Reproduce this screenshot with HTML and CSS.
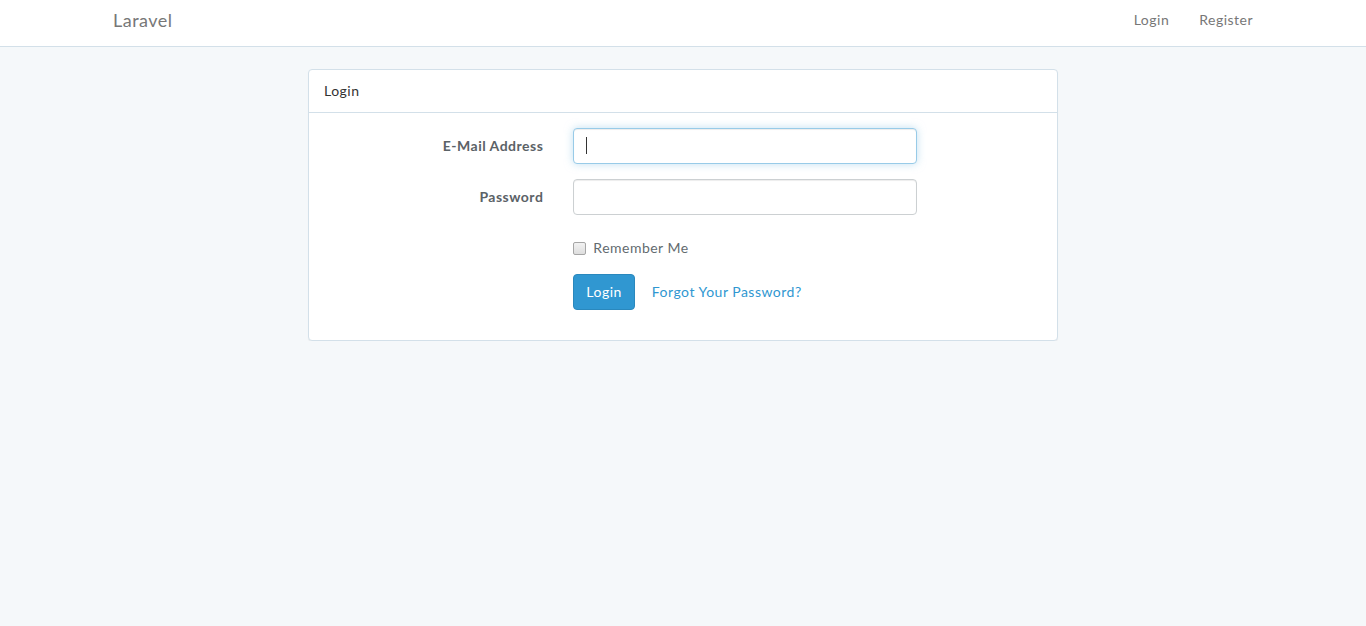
FILE: index.html
```html
<!DOCTYPE html>
<html lang="en">
<head>
<meta charset="utf-8">
<title>Laravel</title>
<link rel="stylesheet" href="styles.css">
</head>
<body>
<nav class="navbar">
  <div class="container nav-inner">
    <a class="brand" href="#">Laravel</a>
    <ul class="nav-right">
      <li><a href="#">Login</a></li>
      <li><a href="#">Register</a></li>
    </ul>
  </div>
</nav>
<div class="container">
  <div class="panel">
    <div class="panel-heading">Login</div>
    <div class="panel-body">
      <form class="form">
        <div class="form-group">
          <label class="control-label" for="email">E-Mail Address</label>
          <div class="control input-wrap"><input id="email" type="email" class="form-control focused"><span class="caret"></span></div>
        </div>
        <div class="form-group">
          <label class="control-label" for="password">Password</label>
          <div class="control"><input id="password" type="password" class="form-control"></div>
        </div>
        <div class="form-group">
          <div class="control-label"></div>
          <div class="control">
            <label class="checkbox"><input type="checkbox"> Remember Me</label>
          </div>
        </div>
        <div class="form-group last">
          <div class="control-label"></div>
          <div class="control actions">
            <button type="button" class="btn">Login</button>
            <a class="link" href="#">Forgot Your Password?</a>
          </div>
        </div>
      </form>
    </div>
  </div>
</div>
</body>
</html>
```
FILE: styles.css
```css
* { box-sizing: border-box; }
html, body { margin: 0; padding: 0; }
body {
  background: #f5f8fa;
  font-family: "Lato", "Open Sans", sans-serif;
  font-size: 14px;
  line-height: 1.6;
  color: #636b6f;
  letter-spacing: 0.035em;
}
a { text-decoration: none; }
.container {
  width: 1170px;
  margin: 0 auto;
  padding: 0 15px;
}
.navbar {
  background: #fff;
  border-bottom: 1px solid #d3e0e9;
  height: 47px;
  margin-bottom: 22px;
}
.nav-inner {
  display: flex;
  justify-content: space-between;
  align-items: center;
  height: 46px;
  padding-bottom: 6px;
}
.brand {
  font-size: 18px;
  color: #777;
  line-height: 20px;
}
.nav-right {
  list-style: none;
  margin: 0 -15px 0 0;
  padding: 0;
  display: flex;
}
.nav-right a {
  display: block;
  padding: 0 15px;
  color: #777;
  line-height: 22px;
}
.panel {
  width: 750px;
  margin: 0 auto;
  background: #fff;
  border: 1px solid #d3e0e9;
  border-radius: 4px;
  box-shadow: 0 1px 1px rgba(0,0,0,.05);
}
.panel-heading {
  padding: 10px 15px;
  border-bottom: 1px solid #d3e0e9;
  color: #333;
  line-height: 22px;
}
.panel-body { padding: 15px; }
.form-group {
  display: flex;
  margin-bottom: 15px;
}
.control-label {
  flex: 0 0 249.33px;
  padding: 7px 15px 0 0;
  margin-left: -15px;
  text-align: right;
  font-weight: 700;
  color: #5b6267;
}
.control {
  flex: 0 0 374px;
  padding: 0 15px;
}
.input-wrap { position: relative; }
.caret {
  position: absolute;
  left: 28px;
  top: 9px;
  width: 1px;
  height: 17px;
  background: #333;
}
.form-control {
  display: block;
  width: 100%;
  height: 36px;
  padding: 6px 12px;
  font: inherit;
  color: #555;
  background: #fff;
  border: 1px solid #ccd0d2;
  border-radius: 4px;
  box-shadow: inset 0 1px 1px rgba(0,0,0,.075);
  outline: none;
}
.form-control.focused {
  border-color: #98cbe8;
  box-shadow: inset 0 1px 1px rgba(0,0,0,.075), 0 0 8px rgba(152,203,232,.6);
}
.checkbox {
  display: flex;
  align-items: center;
  gap: 7px;
  padding-top: 7px;
  height: 29px;
  line-height: 22px;
  color: #636b6f;
}
.checkbox input {
  -webkit-appearance: none;
  appearance: none;
  margin: 0;
  width: 13px;
  height: 13px;
  border: 1px solid #a6a6a6;
  border-radius: 2px;
  background: linear-gradient(#f2f2f2, #dedede);
}
.actions {
  display: flex;
  align-items: center;
  gap: 17px;
}
.btn {
  height: 36px;
  padding: 6px 12px;
  font: inherit;
  letter-spacing: inherit;
  color: #fff;
  background: #3097d1;
  border: 1px solid #2a88bd;
  border-radius: 4px;
}
.link { color: #3097d1; }
```
